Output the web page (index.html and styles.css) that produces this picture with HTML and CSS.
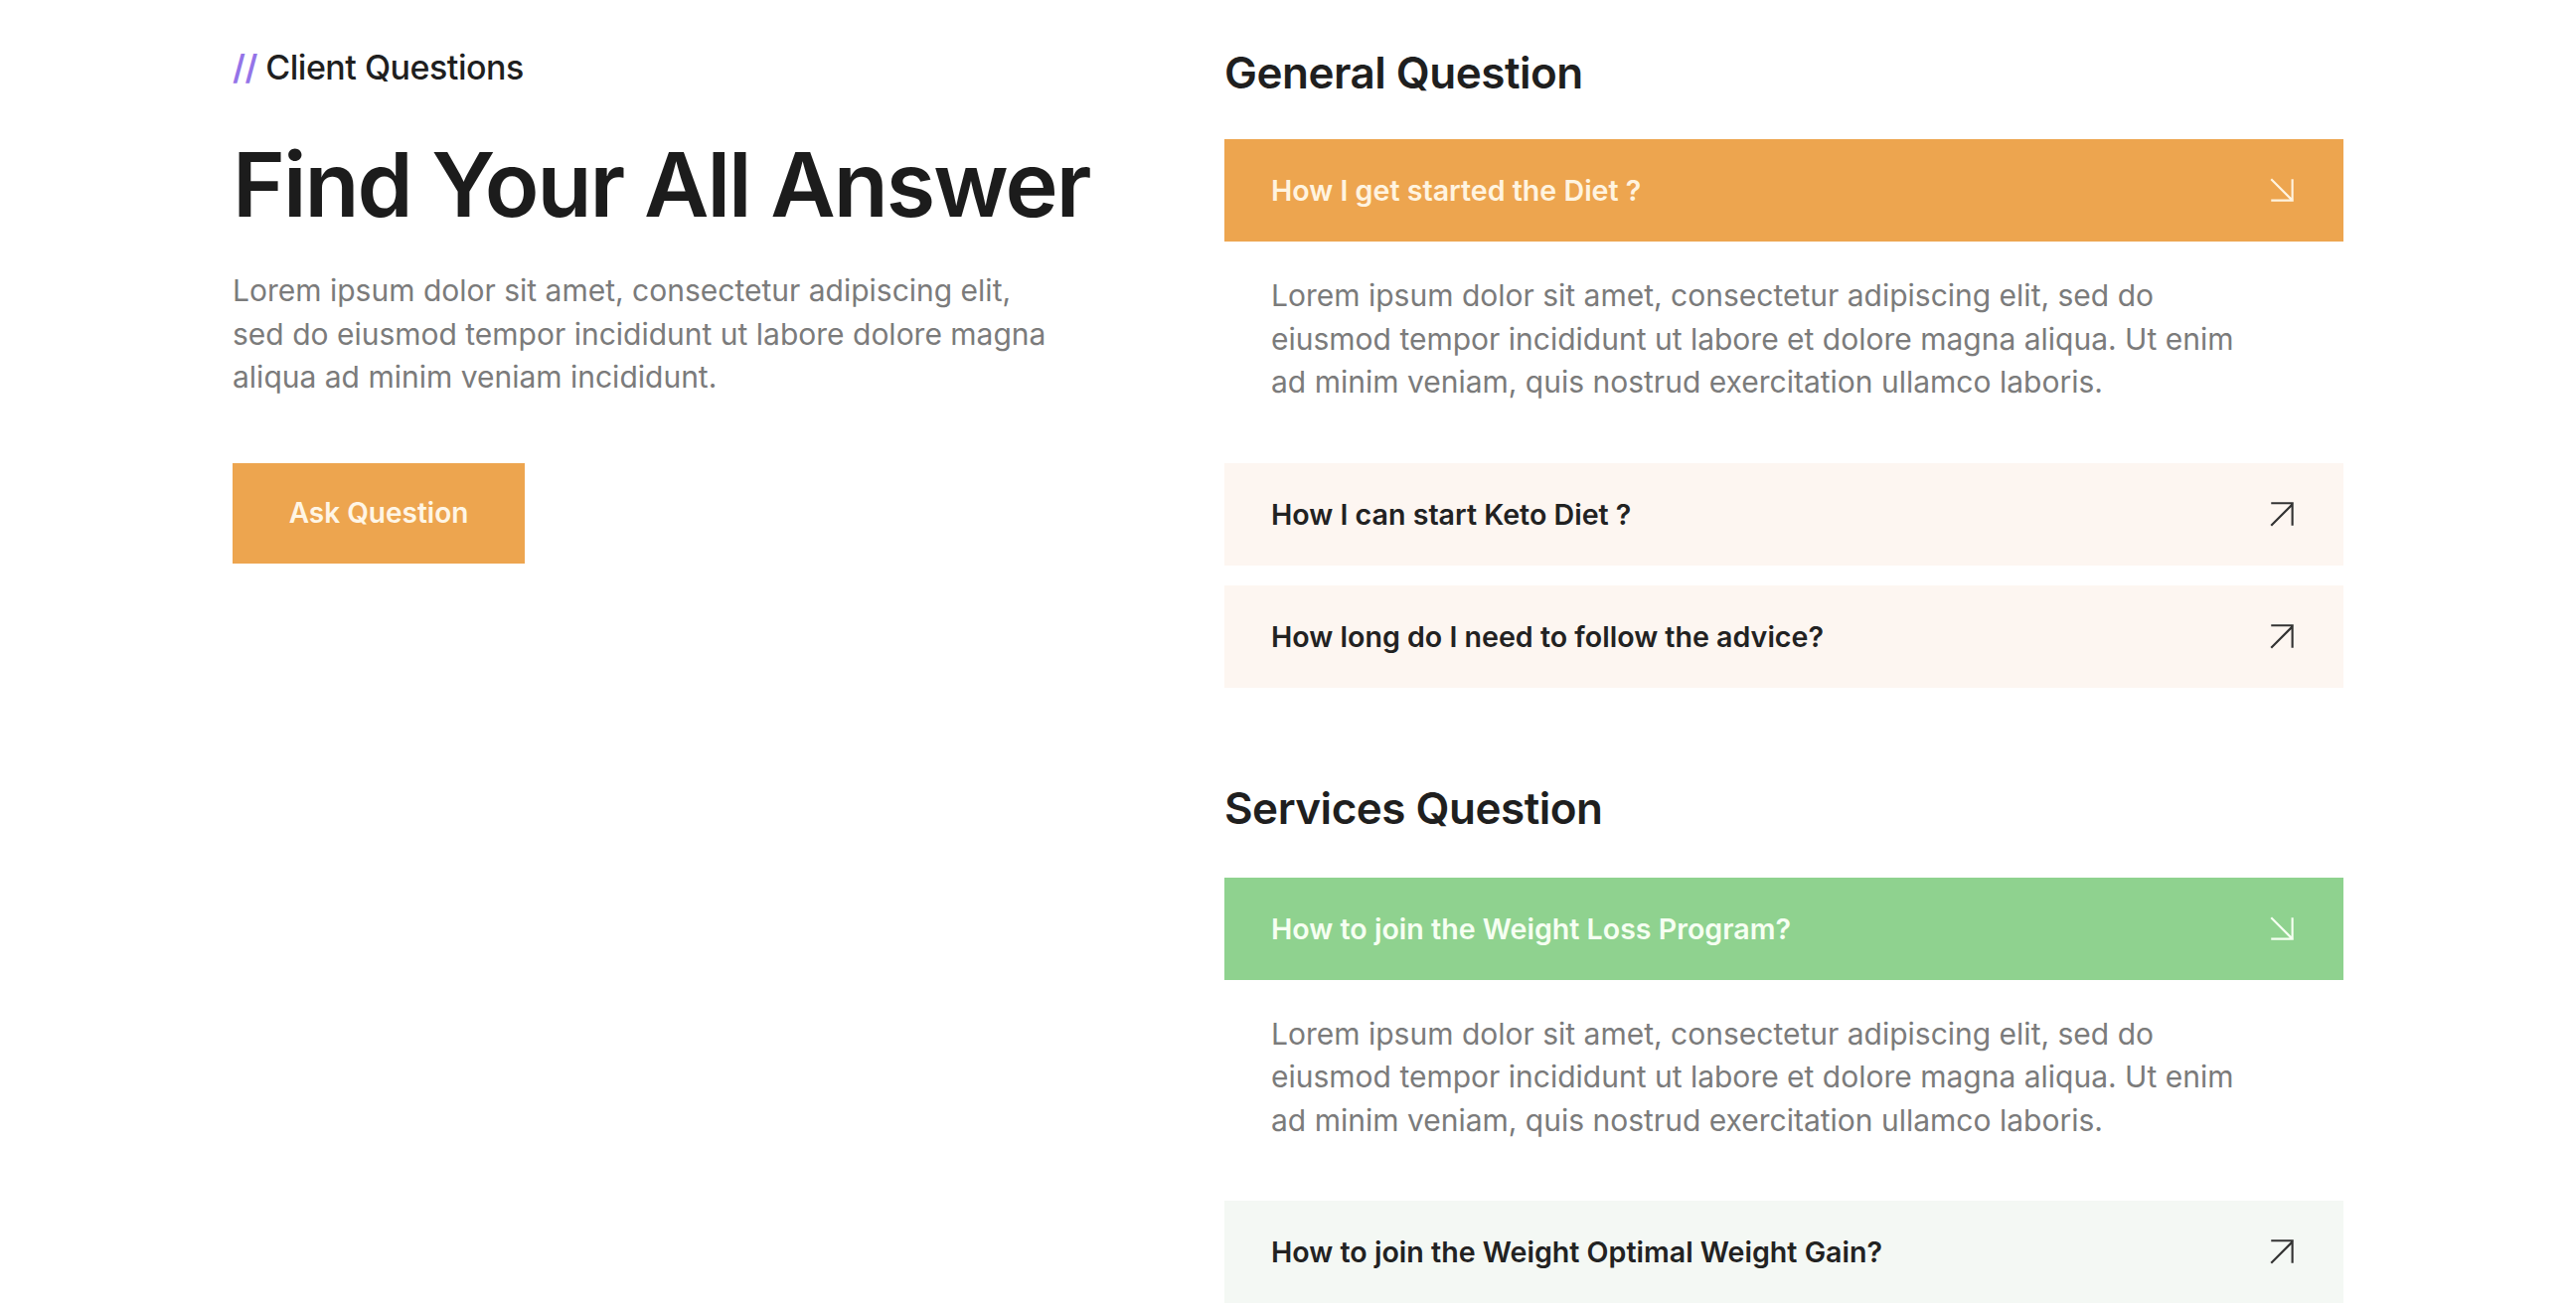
FILE: index.html
```html
<!DOCTYPE html>
<html lang="en">
<head>
<meta charset="utf-8">
<title>Client Questions</title>
<link rel="stylesheet" href="styles.css">
</head>
<body>
<main class="faq">
  <section class="intro">
    <p class="eyebrow"><span class="slashes">//</span> Client Questions</p>
    <h1 class="title">Find Your All Answer</h1>
    <p class="lead">Lorem ipsum dolor sit amet, consectetur adipiscing elit,<br>sed do eiusmod tempor incididunt ut labore dolore magna<br>aliqua ad minim veniam incididunt.</p>
    <a class="btn" href="#">Ask Question</a>
  </section>

  <section class="groups">
    <div class="group">
      <h2 class="group-title">General Question</h2>
      <div class="accordion">
        <div class="item open orange">
          <div class="question">
            <span>How I get started the Diet ?</span>
            <svg class="arrow" viewBox="0 0 24 24"><path d="M2 2 L21 21 M2 21 H22 M21 2 V22"/></svg>
          </div>
          <div class="answer"><p>Lorem ipsum dolor sit amet, consectetur adipiscing elit, sed do<br>eiusmod tempor incididunt ut labore et dolore magna aliqua. Ut enim<br>ad minim veniam, quis nostrud exercitation ullamco laboris.</p></div>
        </div>
        <div class="item peach">
          <div class="question">
            <span>How I can start Keto Diet ?</span>
            <svg class="arrow" viewBox="0 0 24 24"><path d="M2 22 L21 3 M2 2 H22 M21 2 V22"/></svg>
          </div>
        </div>
        <div class="item peach">
          <div class="question">
            <span>How long do I need to follow the advice?</span>
            <svg class="arrow" viewBox="0 0 24 24"><path d="M2 22 L21 3 M2 2 H22 M21 2 V22"/></svg>
          </div>
        </div>
      </div>
    </div>

    <div class="group">
      <h2 class="group-title">Services Question</h2>
      <div class="accordion">
        <div class="item open green">
          <div class="question">
            <span>How to join the Weight Loss Program?</span>
            <svg class="arrow" viewBox="0 0 24 24"><path d="M2 2 L21 21 M2 21 H22 M21 2 V22"/></svg>
          </div>
          <div class="answer"><p>Lorem ipsum dolor sit amet, consectetur adipiscing elit, sed do<br>eiusmod tempor incididunt ut labore et dolore magna aliqua. Ut enim<br>ad minim veniam, quis nostrud exercitation ullamco laboris.</p></div>
        </div>
        <div class="item mint">
          <div class="question">
            <span>How to join the Weight Optimal Weight Gain?</span>
            <svg class="arrow" viewBox="0 0 24 24"><path d="M2 22 L21 3 M2 2 H22 M21 2 V22"/></svg>
          </div>
        </div>
      </div>
    </div>
  </section>
</main>
</body>
</html>
```

FILE: styles.css
```css
* { box-sizing: border-box; }

html, body {
  margin: 0;
  padding: 0;
  background: #ffffff;
}

body {
  font-family: Inter, "Noto Sans", "Liberation Sans", sans-serif;
  color: #1f1f1f;
}

.faq {
  width: 2124px;
  margin: 0 auto;
  padding-top: 46px;
  display: grid;
  grid-template-columns: 1fr 1126px;
  align-items: start;
}

/* Left column */
.intro {
  display: flex;
  flex-direction: column;
  align-items: flex-start;
}

.eyebrow {
  margin: 0;
  font-size: 34px;
  line-height: 44px;
  font-weight: 500;
  color: #1f1f1f;
  letter-spacing: -0.5px;
}

.slashes {
  color: #9474e8;
  font-weight: 600;
}

.title {
  margin: 46px 0 0;
  font-size: 90px;
  line-height: 99px;
  font-weight: 600;
  letter-spacing: -2px;
  color: #1c1c1c;
}

.lead {
  margin: 36px 0 0;
  font-size: 30px;
  line-height: 43.5px;
  color: #7b7b7b;
  white-space: nowrap;
}

.btn {
  margin-top: 64px;
  width: 294px;
  height: 101px;
  display: flex;
  align-items: center;
  justify-content: center;
  background: #eda54f;
  color: #fff6e6;
  font-size: 28px;
  font-weight: 600;
  text-decoration: none;
}

/* Right column */
.groups {
  display: flex;
  flex-direction: column;
  gap: 94px;
}

.group-title {
  margin: 3px 0 43px;
  font-size: 44px;
  line-height: 48px;
  font-weight: 600;
  letter-spacing: -0.5px;
  color: #1f1f1f;
}

.group + .group .group-title {
  margin-bottom: 46px;
}

.accordion {
  display: flex;
  flex-direction: column;
  gap: 20px;
}

.question {
  height: 103px;
  padding: 0 48px 0 47px;
  display: flex;
  align-items: center;
  justify-content: space-between;
  font-size: 28.6px;
  font-weight: 600;
  color: #222222;
}

.arrow {
  width: 27px;
  height: 27px;
  fill: none;
  stroke: currentColor;
  stroke-width: 1.9;
  flex: none;
}

.orange .question { background: #eda54f; color: #fff4e0; }
.green .question { background: #8fd28f; color: #f6fff2; }
.peach .question { background: #fdf6f1; }
.mint .question { background: #f4f8f4; }

.peach .arrow, .mint .arrow { color: #333333; }

.answer {
  padding: 33px 47px 39px;
}

.answer p {
  margin: 0;
  font-size: 30px;
  line-height: 43.5px;
  color: #7b7b7b;
  white-space: nowrap;
}
```
